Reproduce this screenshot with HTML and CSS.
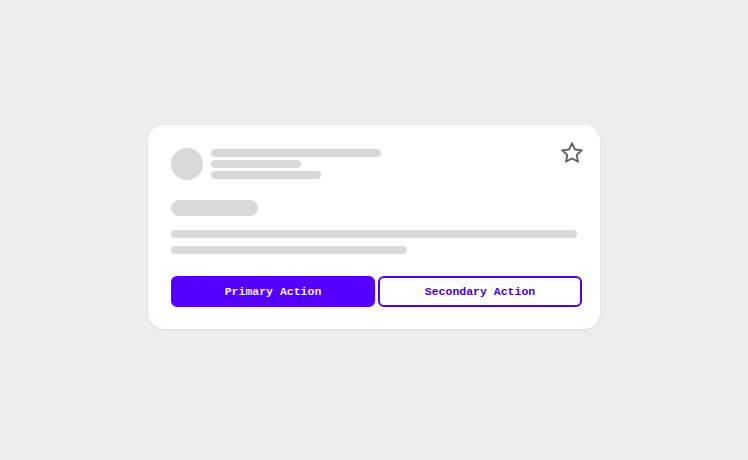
FILE: index.html
```html
<!DOCTYPE html>
<html>
<head>
<meta charset="utf-8">
<link rel="stylesheet" href="styles.css">
</head>
<body>
<div class="card">
  <svg class="star" viewBox="0 0 24 24" width="24" height="24"><polygon points="12 2.5 14.94 8.46 21.5 9.41 16.75 14.04 17.87 20.57 12 17.48 6.13 20.57 7.25 14.04 2.5 9.41 9.06 8.46 12 2.5" fill="none" stroke="#555" stroke-width="1.7" stroke-linejoin="miter"/></svg>
  <div class="header">
    <div class="avatar"></div>
    <div class="meta">
      <div class="bar w170"></div>
      <div class="bar w90"></div>
      <div class="bar w110"></div>
    </div>
  </div>
  <div class="pill"></div>
  <div class="body">
    <div class="bar full"></div>
    <div class="bar w236"></div>
  </div>
  <div class="actions">
    <button class="btn primary">Primary Action</button>
    <button class="btn secondary">Secondary Action</button>
  </div>
</div>
</body>
</html>
```
FILE: styles.css
```css
html, body { margin: 0; padding: 0; }
body {
  width: 748px;
  height: 460px;
  background: #ededed;
  display: flex;
  justify-content: center;
  align-items: flex-start;
  padding-top: 125px;
  box-sizing: border-box;
  font-family: "Liberation Sans", sans-serif;
}
.card {
  position: relative;
  width: 452px;
  box-sizing: border-box;
  padding: 23px 23px 22px;
  background: #fff;
  border-radius: 16px;
  box-shadow: 0 1px 3px rgba(0,0,0,0.08);
}
.star { position: absolute; top: 141px; top: 16px; right: 16px; display: block; }
.header { display: flex; align-items: center; gap: 8px; }
.avatar { width: 32px; height: 32px; border-radius: 50%; background: #d9d9d9; }
.meta { display: flex; flex-direction: column; gap: 3px; }
.bar { height: 8px; border-radius: 4px; background: #d9d9d9; }
.w170 { width: 170px; }
.w90 { width: 90px; }
.w110 { width: 110px; }
.w236 { width: 236px; }
.full { width: 100%; }
.pill { margin-top: 20px; width: 87px; height: 16px; border-radius: 8px; background: #d9d9d9; }
.body { margin-top: 14px; display: flex; flex-direction: column; gap: 8px; }
.actions { margin-top: 22px; display: flex; gap: 3px; margin-right: -5px; }
.btn {
  flex: 1 1 0;
  min-width: 0;
  padding: 0;
  height: 31px;
  border-radius: 6px;
  font-family: "Liberation Mono", "DejaVu Sans Mono", monospace;
  font-size: 11.5px;
  font-weight: bold;
  cursor: pointer;
  box-sizing: border-box;
}
.primary { background: #5500ff; color: #f3eeff; border: 2px solid #5500ff; }
.secondary { background: #fff; color: #4a00d0; border: 2px solid #5200dd; }
```
